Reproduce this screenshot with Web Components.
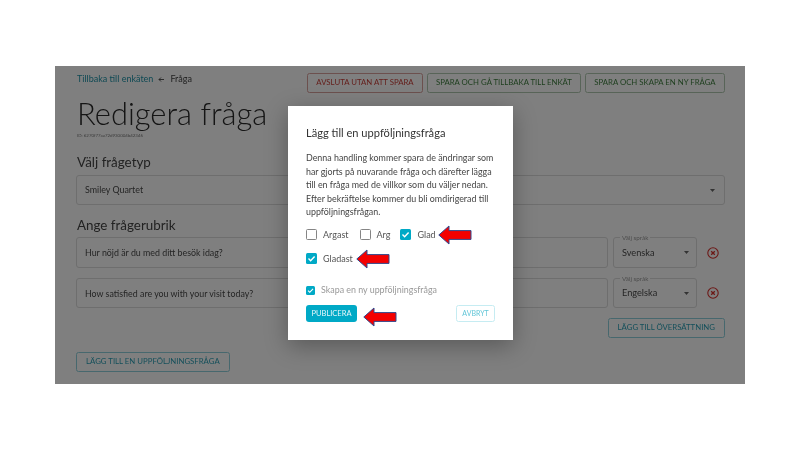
<!DOCTYPE html>
<html><head><meta charset="utf-8"><style>
html,body{margin:0;padding:0;background:#fff;height:450px;overflow:hidden}
body{font-family:Lato,"Liberation Sans",sans-serif}
</style></head><body>
<survey-screen>
  <edit-page></edit-page>
  <follow-dialog slot="dialog"></follow-dialog>
</survey-screen>
<script>
function def(name,html){customElements.define(name,class extends HTMLElement{
  connectedCallback(){ if(this.shadowRoot)return; const r=this.attachShadow({mode:'open'});
    r.innerHTML=typeof html==='function'?html(this):html; }
});}
def('x-btn',`<style>:host{display:inline-flex;box-sizing:border-box;height:20px;align-items:center;justify-content:center;border:1px solid var(--b,#8fd0dc);border-radius:2.5px;font:400 7.8px/1 Lato,sans-serif;color:var(--c,#19a);padding:0 var(--p,8px);white-space:nowrap;text-transform:uppercase}</style><slot></slot>`);
def('x-field',`<style>:host{display:flex;box-sizing:border-box;align-items:center;border:1px solid #dcdcdc;border-radius:3px;padding:0 var(--pr,7px) 0 8px;font:400 8.9px/1 Lato,sans-serif;color:#4a4a4a;position:relative;background:#fff}
.s{flex:1;padding-top:var(--pt,1px)}svg{display:block}</style>
<span class="s"><slot></slot></span><slot name="lab"></slot><svg width="5" height="3" viewBox="0 0 5 3"><path d="M0 0h5L2.5 3z" fill="#666"/></svg>`);
def('x-label',`<style>:host{position:absolute;left:6px;top:-3px;font:400 6.3px/6px Lato,sans-serif;background:#fff;color:#999;padding:0 2px}</style><slot></slot>`);
def('x-title',`<style>:host{display:block;box-sizing:border-box;border:1px solid #dcdcdc;border-radius:3px;padding:0 8px;font:400 8.85px/30px Lato,sans-serif;color:#4a4a4a;background:#fff}</style><slot></slot>`);
def('x-remove',`<style>:host{display:block;width:12px;height:12px}svg{display:block}</style><svg width="12" height="12" viewBox="0 0 12 12" fill="none" stroke="#d9302c"><circle cx="6" cy="6" r="5.2" stroke-width="1.1"/><path d="M4.2 4.2l3.6 3.6M7.8 4.2L4.2 7.8" stroke-width="1.3"/></svg>`);
def('x-arrow',`<style>:host{display:block;width:34px;height:20px;flex:none}svg{display:block}</style><svg width="34" height="20" viewBox="0 0 34 20"><path d="M.8 10L11 1v4.6H33v8.8H11V19z" fill="#f40000" stroke="#2f4a8f" stroke-width="1"/></svg>`);
def('x-check',h=>{const on=h.hasAttribute('on');const sz=h.getAttribute('size')||11;return `<style>:host{display:inline-flex;align-items:center;font:400 9px/1 Lato,sans-serif;color:#555}
.b{box-sizing:border-box;width:${sz}px;height:${sz}px;border-radius:1.5px;margin-right:${h.getAttribute('gap')||6}px;display:block;flex:none;${on?'background:#00a9c6':'border:1.5px solid #858585'}}svg{display:block}</style>
<span class="b">${on?`<svg width="${sz}" height="${sz}" viewBox="0 0 11 11" fill="none" stroke="#fff" stroke-width="1.4"><path d="M2.5 5.6l2.1 2.1 4-4.3"/></svg>`:''}</span><slot></slot>`});
def('survey-screen',`<style>:host{display:block;position:relative;width:690px;height:318px;margin:66px 0 0 55px;filter:blur(.3px)}
.ov{position:absolute;inset:0;background:rgba(0,0,0,.5)}
.m{position:absolute;left:233px;top:40px}</style>
<slot></slot><div class="ov"></div><div class="m"><slot name="dialog"></slot></div>`);
def('edit-page',`<style>
:host{display:block;box-sizing:border-box;width:690px;height:318px;background:#fff;padding:7px 20px 0 21px;font-family:Lato,sans-serif;color:#333}
.top{display:flex;justify-content:space-between;height:20px}
.crumb{font-size:9px;line-height:12px;display:flex;align-items:center;height:12px;margin-left:1px;color:#444}
.crumb a{color:#1f93a8}
.crumb svg{display:block;margin:1px 6px 0 5px}
.acts{display:flex;gap:3.5px}
.red{--c:#c9403a;--b:#d9a09c;--p:8.4px}
.grn{--c:#3f7f3f;--b:#b0c8b0;--p:8.4px}
h1{margin:4px 0 0 1px;font:300 30.9px/34px Lato,sans-serif;color:#2a2a2a}
.id{font-size:4.4px;line-height:5px;margin:2px 0 0 1px;color:#777;height:5px}
h2{margin:0 0 0 1px;font:400 13.4px/16px Lato,sans-serif;color:#444}
.t1{margin-top:16px}
.sel{height:30px;margin-top:5px;--pr:9px}
.t2{margin-top:12px}
.rows{display:grid;grid-template-columns:532px 84px 28px;grid-template-rows:31px 30px;column-gap:5px;margin-top:4px;row-gap:10px;width:649px}
.rows x-remove{justify-self:start;align-self:center;margin-left:5px}
.rows x-field{font-size:9.2px;--pt:0}
.tr{display:flex;justify-content:flex-end;margin-top:10px}
.bt{margin-top:10px}
.cy{--c:#2a9fb5;--p:9px}
</style>
<div class="top"><div class="crumb"><a>Tillbaka till enkäten</a><svg width="6" height="5" viewBox="0 0 6 5" fill="none" stroke="#444" stroke-width=".9"><path d="M6 2.5H1M3 .5l-2 2 2 2"/></svg><span>Fråga</span></div>
<div class="acts"><x-btn class="red">Avsluta utan att spara</x-btn><x-btn class="grn">Spara och gå tillbaka till enkät</x-btn><x-btn class="grn">Spara och skapa en ny fråga</x-btn></div></div>
<h1>Redigera fråga</h1>
<div class="id">ID: 6270f77aa72d930004b42346</div>
<h2 class="t1">Välj frågetyp</h2>
<x-field class="sel">Smiley Quartet</x-field>
<h2 class="t2">Ange frågerubrik</h2>
<div class="rows">
<x-title>Hur nöjd är du med ditt besök idag?</x-title><x-field>Svenska<x-label slot="lab">Välj språk</x-label></x-field><x-remove></x-remove>
<x-title>How satisfied are you with your visit today?</x-title><x-field>Engelska<x-label slot="lab">Välj språk</x-label></x-field><x-remove></x-remove>
</div>
<div class="tr"><x-btn class="cy">Lägg till översättning</x-btn></div>
<div class="bt"><x-btn class="cy">Lägg till en uppföljningsfråga</x-btn></div>`);
def('follow-dialog',`<style>
:host{display:block;box-sizing:border-box;width:225px;height:234px;background:#fff;padding:20px 18px 0;box-shadow:0 6px 22px rgba(0,0,0,.3);font-family:Lato,sans-serif;color:#333}
h3{margin:0;font:400 11.1px/14px Lato,sans-serif;color:#333}
p{margin:11px 0 0;font-size:8.9px;line-height:13.5px;color:#444;width:192px}
.opts{display:flex;flex-wrap:wrap;align-items:center;margin-top:4px;width:190px}
.o{display:flex;align-items:center;height:24px}
.ny{display:flex;color:#999;margin-top:15px;font-size:8.9px}
.foot{display:flex;justify-content:space-between;align-items:flex-start;margin-top:10px}
.pub{background:#00a9c6;color:#e8f8fb;border-radius:3px;font-size:7.5px;height:17px;width:51px;display:flex;align-items:center;justify-content:center;text-transform:uppercase;flex:none}
.left{display:flex;align-items:flex-start;gap:6px}
.left x-arrow{margin-top:2px}
.av{--c:#62c6d8;--b:#c6ecf2;height:17px;--p:0;font-size:7px;width:39px}
</style>
<h3>Lägg till en uppföljningsfråga</h3>
<p>Denna handling kommer spara de ändringar som har gjorts på nuvarande fråga och därefter lägga till en fråga med de villkor som du väljer nedan. Efter bekräftelse kommer du bli omdirigerad till uppföljningsfrågan.</p>
<div class="opts">
<div class="o" style="margin-right:11px"><x-check>Argast</x-check></div>
<div class="o" style="margin-right:10px"><x-check>Arg</x-check></div>
<div class="o"><x-check on>Glad</x-check><x-arrow style="margin-left:2px"></x-arrow></div>
<div class="o"><x-check on>Gladast</x-check><x-arrow style="margin-left:3px"></x-arrow></div>
</div>
<x-check class="ny" on size="9" gap="6">Skapa en ny uppföljningsfråga</x-check>
<div class="foot"><div class="left"><div class="pub">Publicera</div><x-arrow></x-arrow></div><x-btn class="av">Avbryt</x-btn></div>`);
</script>
</body></html>
